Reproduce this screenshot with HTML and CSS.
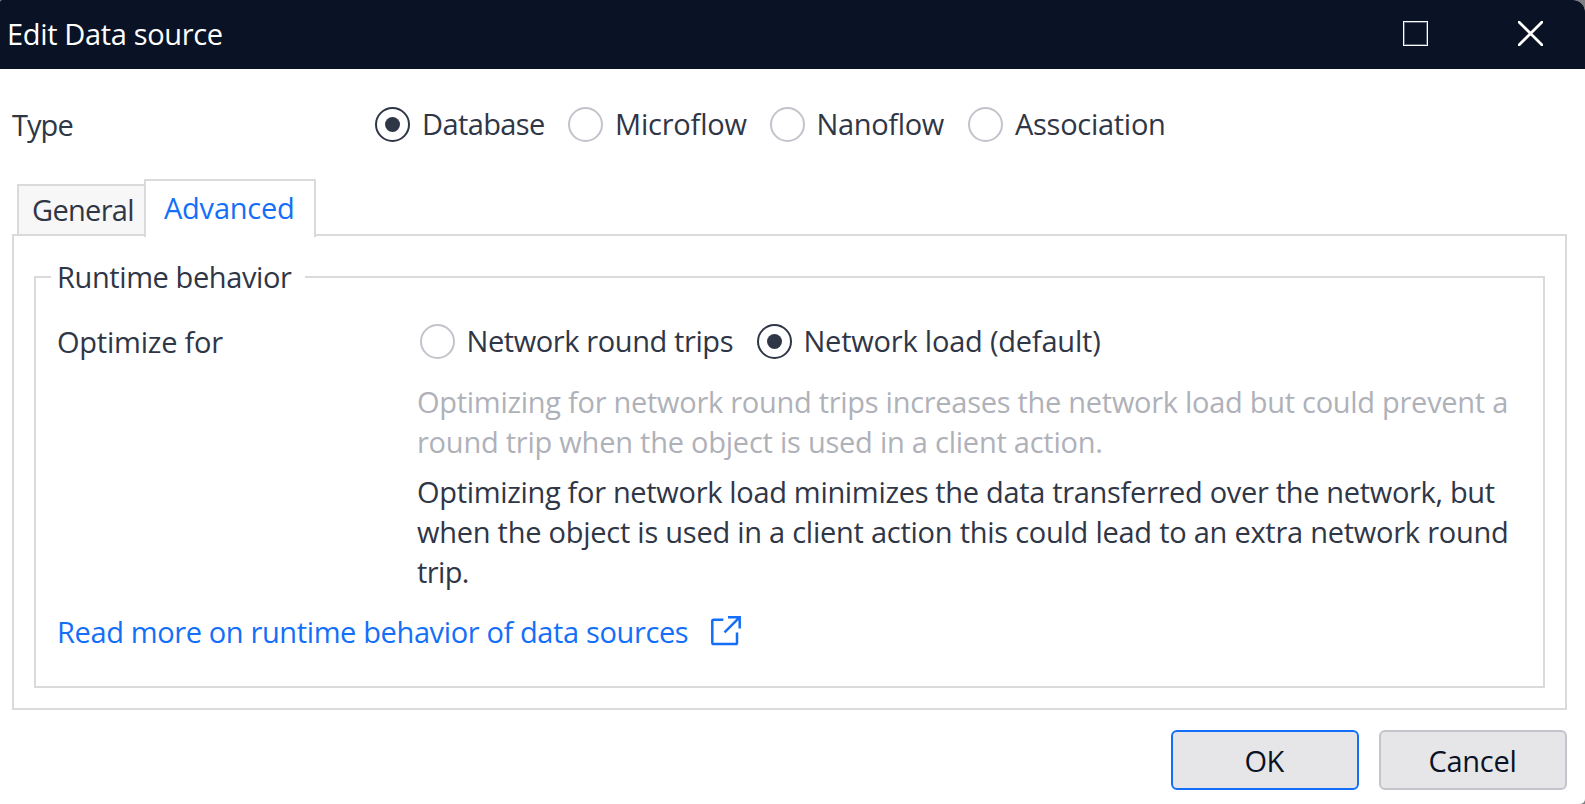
FILE: index.html
```
<!DOCTYPE html>
<html lang="en">
<head>
<meta charset="utf-8">
<title>Edit Data source</title>
<link rel="stylesheet" href="styles.css">
</head>
<body>
<div class="dialog">
  <header class="titlebar">
    <h1 class="title">Edit Data source</h1>
    <div class="window-buttons">
      <svg class="maximize" width="25" height="25" viewBox="0 0 25 25"><rect x="1" y="1" width="23" height="23" fill="none" stroke="#566072" stroke-width="2"/><rect x=".5" y=".5" width="24" height="24" fill="none" stroke="#fff"/></svg>
      <svg class="close" width="25" height="25" viewBox="0 0 25 25"><path d="M0 0L25 25M25 0L0 25" stroke="#fff" stroke-width="2.7"/></svg>
    </div>
  </header>

  <main class="content">
    <div class="type-row">
      <span class="type-label">Type</span>
      <div class="type-options">
        <label class="option database"><span class="radio checked"></span><span class="text">Database</span></label>
        <label class="option microflow"><span class="radio"></span><span class="text">Microflow</span></label>
        <label class="option nanoflow"><span class="radio"></span><span class="text">Nanoflow</span></label>
        <label class="option association"><span class="radio"></span><span class="text">Association</span></label>
      </div>
    </div>

    <nav class="tabs">
      <div class="tab general">General</div>
      <div class="tab advanced">Advanced</div>
    </nav>

    <section class="panel">
      <div class="group">
        <div class="group-head"><span class="rule-left"></span><span class="legend">Runtime behavior</span><span class="rule-right"></span></div>
        <div class="group-body">
          <div class="optimize-row">
            <span class="optimize-label">Optimize for</span>
            <div class="optimize-options">
              <label class="option trips"><span class="radio"></span><span class="text">Network round trips</span></label>
              <label class="option load"><span class="radio checked"></span><span class="text">Network load (default)</span></label>
            </div>
          </div>
          <p class="hint muted"><span class="t1">Optimizing for network round trips increases the network load but could prevent a</span><br><span class="t2">round trip when the object is used in a client action.</span></p>
          <p class="hint"><span class="l1">Optimizing for network load minimizes the data transferred over the network, but</span><br><span class="l2">when the object is used in a client action this could lead to an extra network round</span><br><span class="l3">trip.</span></p>
          <a class="more"><span class="more-text">Read more on runtime behavior of data sources</span>
            <svg width="32" height="32" viewBox="0 0 32 32" fill="none" stroke="#146ff8" stroke-width="2.5"><path d="M13.3 4.7H3.6Q2.3 4.7 2.3 6V27.7Q2.3 29 3.6 29H25.7Q27 29 27 27.7V17.5M18 2.2H29.7V13.5M29.5 2.4L14.5 17.4"/></svg>
          </a>
        </div>
      </div>
    </section>

    <footer class="actions">
      <button class="button ok">OK</button>
      <button class="button cancel">Cancel</button>
    </footer>
  </main>
</div>
</body>
</html>
```
FILE: styles.css
```
* { box-sizing: border-box; }
body {
  margin: 0;
  background: #808084;
  color: #2f3646;
  font: 29px/40px "Open Sans", "Noto Sans", sans-serif;
  overflow: hidden;
}
.dialog {
  width: 1585px;
  height: 804px;
  background: #fff;
  border-radius: 2px 12px 5px 0;
  overflow: hidden;
  white-space: nowrap;
}

/* Title bar */
.titlebar {
  display: flex;
  justify-content: space-between;
  height: 69px;
  padding: 14px 42px 0 7px;
  background: #0a1325;
  color: #fff;
}
.title { margin: 0; font: inherit; letter-spacing: -.35px; }
.window-buttons { display: flex; gap: 90px; padding-top: 7px; }

/* Data source type */
.content { padding: 35px 18px 0 12px; }
.type-row { display: flex; height: 75px; }
.type-label { width: 363px; padding: 1px 0 0; letter-spacing: -.95px; }
.type-options, .optimize-options { display: flex; }
.option { display: flex; gap: 12px; }
.radio {
  display: flex;
  align-items: center;
  justify-content: center;
  flex: none;
  width: 35px;
  height: 35px;
  margin-top: 3px;
  border: 2px solid #c3c3cb;
  border-radius: 50%;
}
.radio.checked { border-color: #2f3646; }
.radio.checked::after {
  content: "";
  width: 15px;
  height: 15px;
  border-radius: 50%;
  background: #2f3646;
}
.database { width: 193px; letter-spacing: -.6px; }
.microflow { width: 201.5px; letter-spacing: -.2px; }
.nanoflow { width: 198.5px; letter-spacing: -.35px; }
.association { letter-spacing: -.28px; }

/* Tabs */
.tabs { display: flex; align-items: flex-end; height: 58px; margin-bottom: -3px; padding-left: 5px; }
.tab { border: 2px solid #dadadc; border-bottom: 0; }
.general {
  width: 129px;
  height: 50px;
  margin: 0 -2px 3px 0;
  padding: 4px 0 0 13px;
  background: #f7f7f8;
  letter-spacing: -.7px;
}
.advanced {
  position: relative;
  width: 172px;
  height: 58px;
  padding: 7px 0 0 18px;
  background: #fff;
  color: #146ff8;
  letter-spacing: -.23px;
}

/* Tab panel */
.panel { height: 476px; padding: 20px; border: 2px solid #dadadc; }
.group { display: flex; flex-direction: column; height: 432px; }
.group-head { display: flex; height: 40px; }
.rule-left, .rule-right { height: 20px; margin-top: 20px; border-top: 2px solid #dadadc; }
.rule-left { width: 17px; border-left: 2px solid #dadadc; }
.legend { width: 254px; padding: 1px 0 0 6px; letter-spacing: -.4px; }
.rule-right { flex: 1; border-right: 2px solid #dadadc; }
.group-body {
  flex: 1;
  padding: 25px 0 0 21px;
  border: 2px solid #dadadc;
  border-top: 0;
}
.optimize-row { display: flex; height: 61px; }
.optimize-label { width: 362.5px; padding-top: 1px; letter-spacing: -.22px; }
.trips { width: 337px; letter-spacing: -.4px; }
.load { letter-spacing: -.21px; }
.hint { margin: 0 0 10px 360px; }
.muted { color: #afb1b9; }
.t1 { letter-spacing: -.28px; }
.t2 { letter-spacing: -.235px; }
.l1 { letter-spacing: -.319px; }
.l2 { letter-spacing: -.25px; }
.l3 { letter-spacing: -.6px; }
.more { display: flex; gap: 21.5px; margin-top: 19px; color: #146ff8; }
.more-text { padding-top: 1px; letter-spacing: -.374px; }
.more svg { margin-top: 4px; }

/* Actions */
.actions { display: flex; justify-content: flex-end; gap: 20px; padding-top: 20px; }
.button {
  width: 188px;
  height: 60px;
  padding: 1px 0 0;
  border: 2px solid #c3c3cb;
  border-radius: 6px;
  background: #e6e6e9;
  color: #0a1325;
  font: inherit;
}
.ok { padding-right: 2px; border-color: #146ff8; letter-spacing: -.55px; }
.cancel { padding-right: 1px; letter-spacing: -.25px; }
```
